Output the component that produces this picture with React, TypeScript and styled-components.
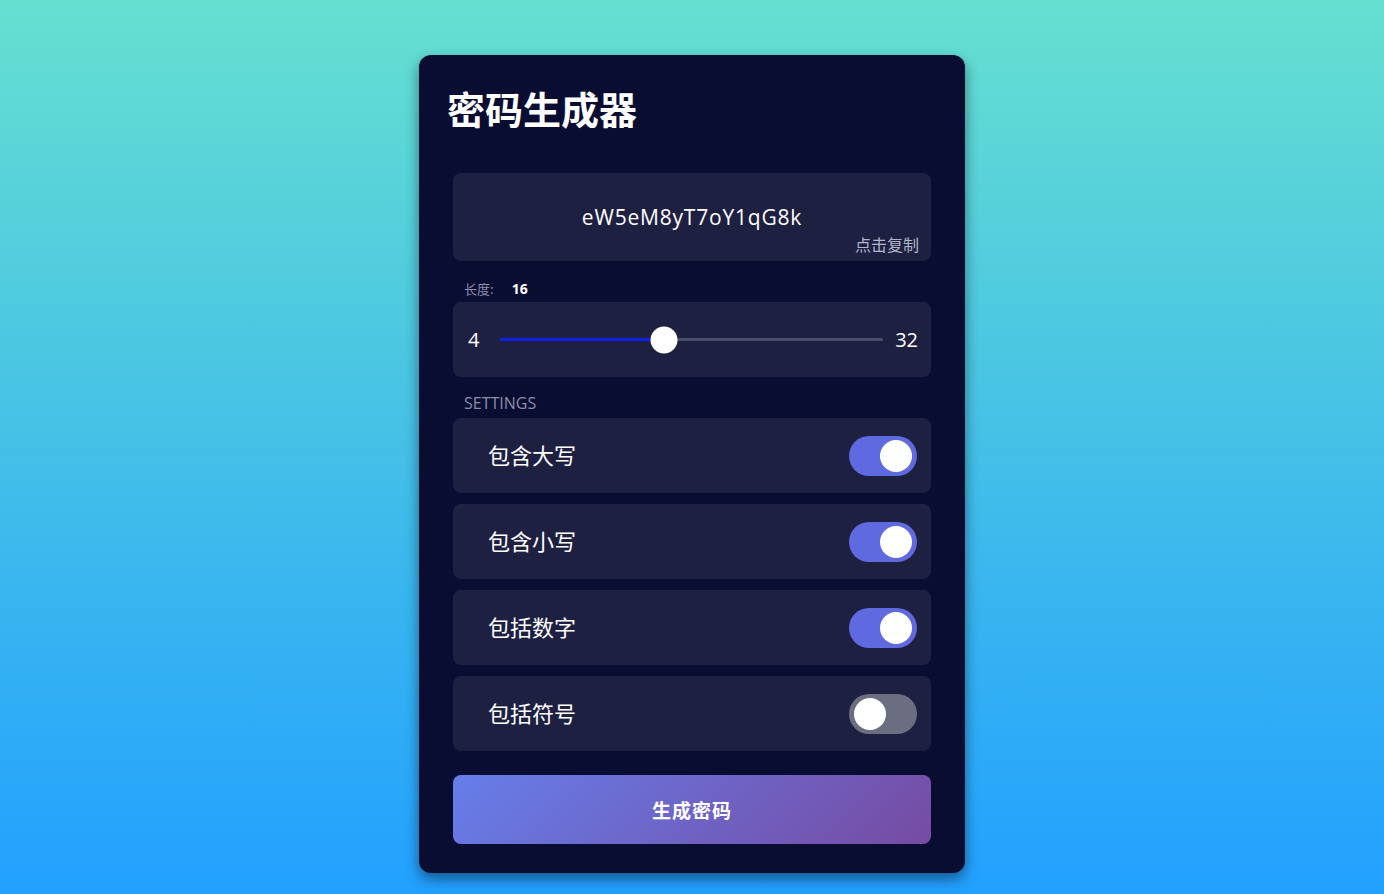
import React, { useState } from 'react';
import styled, { createGlobalStyle } from 'styled-components';

const GlobalStyle = createGlobalStyle`
  * { box-sizing: border-box; }
  html, body { margin: 0; padding: 0; }
  body {
    min-height: 894px;
    background: linear-gradient(to bottom, #66e0d0 0%, #22a0ff 100%);
    font-family: "Noto Sans CJK SC", "Noto Sans", sans-serif;
  }
`;

const MIN = 4;
const MAX = 32;

interface Setting {
  key: string;
  label: string;
  on: boolean;
}

const App = () => {
  const [length] = useState(16);
  const [settings, setSettings] = useState<Setting[]>([
    { key: 'upper', label: '包含大写', on: true },
    { key: 'lower', label: '包含小写', on: true },
    { key: 'number', label: '包括数字', on: true },
    { key: 'symbol', label: '包括符号', on: false },
  ]);

  const percent = ((length - MIN) / (MAX - MIN)) * 100;

  const toggle = (key: string) =>
    setSettings(list => list.map(s => (s.key === key ? { ...s, on: !s.on } : s)));

  return (
    <>
      <GlobalStyle />
      <Page>
        <Card>
          <Header>
            <Title>密码生成器</Title>
          </Header>
          <Body>
            <ResultBox>
              <Password>eW5eM8yT7oY1qG8k</Password>
              <CopyHint>点击复制</CopyHint>
            </ResultBox>

            <FieldLabel>
              长度:<LengthValue>{length}</LengthValue>
            </FieldLabel>
            <SliderBox>
              <RangeNumber>{MIN}</RangeNumber>
              <Track>
                <Fill style={{ width: `${percent}%` }} />
                <Thumb style={{ left: `${percent}%` }} />
              </Track>
              <RangeNumber>{MAX}</RangeNumber>
            </SliderBox>

            <SectionLabel>SETTINGS</SectionLabel>
            <SettingList>
              {settings.map(s => (
                <SettingRow key={s.key}>
                  <SettingText>{s.label}</SettingText>
                  <Switch $on={s.on} onClick={() => toggle(s.key)}>
                    <Knob $on={s.on} />
                  </Switch>
                </SettingRow>
              ))}
            </SettingList>

            <GenerateButton>生成密码</GenerateButton>
          </Body>
        </Card>
      </Page>
    </>
  );
};

export default App;

const Page = styled.main`
  display: flex;
  justify-content: center;
  padding-top: 55px;
`;

const Card = styled.section`
  width: 546px;
  background-color: #0a0d32;
  border-radius: 12px;
  box-shadow: 0 6px 14px rgba(0, 0, 0, 0.45);
  padding-bottom: 29px;
`;

const Header = styled.header`
  padding: 30px 28px 0 28px;
`;

const Title = styled.h1`
  margin: 0;
  font-size: 38px;
  line-height: 46px;
  font-weight: 700;
  color: #fff;
  letter-spacing: 0;
`;

const Body = styled.div`
  padding: 42px 34px 0 34px;
`;

const ResultBox = styled.div`
  position: relative;
  height: 88px;
  display: flex;
  align-items: center;
  justify-content: center;
  background-color: #1e2042;
  border-radius: 8px;
`;

const Password = styled.span`
  font-family: "Open Sans", "Liberation Sans", sans-serif;
  font-size: 21px;
  color: #fff;
  letter-spacing: 0.8px;
`;

const CopyHint = styled.span`
  position: absolute;
  right: 12px;
  bottom: 6px;
  font-size: 16px;
  line-height: 22px;
  color: #b4b6c8;
`;

const FieldLabel = styled.div`
  padding: 19px 11px 5px 11px;
  font-size: 13px;
  line-height: 17px;
  color: #8c8ea6;
`;

const LengthValue = styled.span`
  margin-left: 18px;
  font-family: "Open Sans", "Liberation Sans", sans-serif;
  font-weight: 700;
  font-size: 14px;
  color: #fff;
`;

const SliderBox = styled.div`
  height: 75px;
  display: flex;
  align-items: center;
  padding: 0 13px 0 15px;
  background-color: #1e2042;
  border-radius: 8px;
`;

const RangeNumber = styled.span`
  font-family: "Open Sans", "Liberation Sans", sans-serif;
  font-size: 20px;
  color: #fff;
`;

const Track = styled.div`
  position: relative;
  flex: 1;
  height: 3px;
  margin: 0 12px 0 21px;
  border-radius: 2px;
  background-color: #4b4d68;
`;

const Fill = styled.div`
  height: 100%;
  border-radius: 2px;
  background-color: #0f1fe6;
`;

const Thumb = styled.div`
  position: absolute;
  top: 50%;
  width: 27px;
  height: 27px;
  border-radius: 50%;
  background-color: #fff;
  transform: translate(-50%, -50%);
`;

const SectionLabel = styled.div`
  padding: 18px 11px 6px 11px;
  font-family: "Open Sans", "Liberation Sans", sans-serif;
  font-size: 16px;
  line-height: 17px;
  color: #8c8ea6;
`;

const SettingList = styled.div`
  display: flex;
  flex-direction: column;
  gap: 11px;
`;

const SettingRow = styled.div`
  height: 75px;
  display: flex;
  align-items: center;
  justify-content: space-between;
  padding: 0 14px 0 35px;
  background-color: #1e2042;
  border-radius: 8px;
`;

const SettingText = styled.span`
  margin-bottom: 4px;
  font-size: 22px;
  color: #fff;
`;

const Switch = styled.button<{ $on: boolean }>`
  position: relative;
  width: 68px;
  height: 40px;
  padding: 0;
  border: none;
  border-radius: 20px;
  cursor: pointer;
  background-color: ${({ $on }) => ($on ? '#5f69e0' : '#6b6e80')};
`;

const Knob = styled.span<{ $on: boolean }>`
  position: absolute;
  top: 4px;
  left: ${({ $on }) => ($on ? '31px' : '5px')};
  width: 32px;
  height: 32px;
  border-radius: 50%;
  background-color: #fff;
`;

const GenerateButton = styled.button`
  display: block;
  width: 100%;
  height: 69px;
  margin-top: 24px;
  border: none;
  border-radius: 8px;
  cursor: pointer;
  background: linear-gradient(135deg, #667eea 0%, #764ba2 100%);
  font-family: "Noto Sans CJK SC", "Noto Sans", sans-serif;
  font-size: 19px;
  font-weight: 700;
  color: #fff;
  letter-spacing: 1px;
`;
